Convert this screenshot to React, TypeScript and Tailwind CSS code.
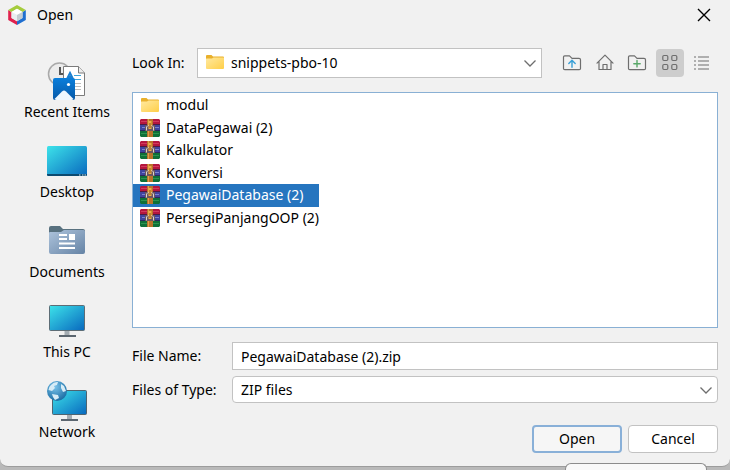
import type { ReactNode } from 'react';
import { useState } from 'react';

function NetBeansLogo() {
  return (
    <svg width="20" height="22" viewBox="0 0 20 22" aria-hidden="true">
      <path d="M1.2 6v10L10 21v-3.8l-5.500-3.100V7.900z" fill="#e0224e" />
      <path d="M18.800 6v10L10 21v-3.800l5.500-3.100V7.900z" fill="#1f6fd0" />
      <path d="M10 1 1.200 6l3.300 1.900L10 4.800l5.500 3.100L18.800 6z" fill="#a5cc3c" />
      <path d="m10 4.800 5.500 3.100L10 11 4.500 7.900z" fill="#fff" />
      <path d="M4.500 7.900 10 11v6.200l-5.500-3.100z" fill="#e9eef0" />
      <path d="M15.500 7.900 10 11v6.200l5.500-3.100z" fill="#c3ccd0" />
    </svg>
  );
}

function Gradients() {
  return (
    <svg width="0" height="0" className="absolute" aria-hidden="true">
      <defs>
        <linearGradient id="screen" x1="0" y1="0" x2="1" y2="1">
          <stop offset="0" stopColor="#3de3ea" />
          <stop offset="1" stopColor="#0868be" />
        </linearGradient>
        <linearGradient id="photo" x1="0" y1="0" x2="0" y2="1">
          <stop offset="0" stopColor="#0a7edb" />
          <stop offset="1" stopColor="#0759a8" />
        </linearGradient>
        <linearGradient id="docs" x1="0" y1="0" x2="1" y2="1">
          <stop offset="0" stopColor="#aec4dc" />
          <stop offset="1" stopColor="#6583a5" />
        </linearGradient>
        <linearGradient id="folder" x1="0" y1="0" x2="1" y2="1">
          <stop offset="0" stopColor="#ffe9a0" />
          <stop offset="1" stopColor="#ffcf48" />
        </linearGradient>
        <radialGradient id="globe" cx="0.4" cy="0.3" r="0.7">
          <stop offset="0" stopColor="#79c3ea" />
          <stop offset="1" stopColor="#1d6ea5" />
        </radialGradient>
      </defs>
    </svg>
  );
}

function RecentIcon() {
  return (
    <svg width="40" height="40" viewBox="0 0 40 40" aria-hidden="true">
      <circle cx="12.500" cy="13" r="11" fill="#ececec" stroke="#a9a9a9" strokeWidth="1.500" />
      <path d="M13 6v7h5" fill="none" stroke="#555" strokeWidth="2" />
      <path d="M16.500 5.500h15l6 6.500v22.500h-21z" fill="#fff" stroke="#7b7b7b" />
      <path d="M31.500 5.500V12h6" fill="#ececec" stroke="#7b7b7b" />
      <path d="m20 18 3-6 3 6m-5-2h4" fill="none" stroke="#1a7fd0" strokeWidth="2" />
      <path d="M27 14.500h7M20 18.500h14" stroke="#3da4dc" />
      <path d="M24 22.500h10M24 25.500h10M24 28.500h10" stroke="#bdbdbd" />
      <rect x="6" y="17" width="22" height="22" rx="2" fill="url(#photo)" />
      <path d="M7.500 38 15 30.500q2-2 4 0l7.500 7.500q-1 1-2 1h-15q-1 0-2-1z" fill="#eef7ff" />
      <circle cx="21.500" cy="23.500" r="1.600" fill="#fff" />
    </svg>
  );
}

function DesktopIcon() {
  return (
    <svg width="40" height="40" viewBox="0 0 40 40" aria-hidden="true">
      <rect y="5" width="40" height="30" rx="1.500" fill="url(#screen)" />
      <path d="M0 33h40v.500q0 1.500-1.500 1.500h-37Q0 35 0 33.500z" fill="#0c4a70" />
      <path d="M32 34h1.500m1.500 0h1.500m1 0H39" stroke="#d5e9f5" />
    </svg>
  );
}

function DocumentsIcon() {
  return (
    <svg width="40" height="40" viewBox="0 0 40 40" aria-hidden="true">
      <path d="M2 7q0-2 2-2h9l3 3h20q2 0 2 2v5H2z" fill="#58717f" />
      <path d="M2 12q0-1 1-1h11l3-2h19.500Q38 9 38 10.500V31q0 2-2 2H4q-2 0-2-2z" fill="url(#docs)" />
      <path d="M12 14h8M12 18h8M12 22.500h16M12 27h16" stroke="#fff" strokeWidth="2" />
      <rect x="22" y="13" width="6" height="6" fill="#fff" />
    </svg>
  );
}

function ComputerIcon() {
  return (
    <svg width="40" height="40" viewBox="0 0 40 40" aria-hidden="true">
      <rect x="2.500" y="4.500" width="35" height="25" rx="1" fill="url(#screen)" stroke="#5d6d76" />
      <path d="M17.500 30h5v4h-5z" fill="#a5adb3" />
      <path d="M12 34h17v2H12z" fill="#5b6670" />
    </svg>
  );
}

function NetworkIcon() {
  return (
    <svg width="40" height="42" viewBox="0 0 40 42" aria-hidden="true">
      <rect x="5.500" y="10.500" width="34" height="24" rx="1" fill="url(#screen)" stroke="#4f6470" />
      <path d="M20 35h5v4h-5z" fill="#a5adb3" />
      <path d="M14 39h17v2H14z" fill="#5b6670" />
      <circle cx="10" cy="11" r="10" fill="url(#globe)" />
      <path d="M4 5q3-3.500 7-3l-1 3-3 1 1 2-3 3-3.500-1Q1.500 7 4 5zM14 4l3 2 2 5-3 1-2-4zM5 14l6 1 1 3-4 2-2-3z" fill="#d7ecf6" />
    </svg>
  );
}

function FolderIcon() {
  return (
    <svg width="20" height="18" viewBox="0 0 20 18" className="shrink-0" aria-hidden="true">
      <path d="M1 3q0-1 1-1h4.500L8 3.500h10q1 0 1 1V8H1z" fill="#e9b02b" />
      <path d="M1 6q0-.500.500-.500H7L8.500 4.500h10q.500 0 .500.500v10q0 1-1 1H2q-1 0-1-1z" fill="url(#folder)" />
    </svg>
  );
}

function ArchiveIcon() {
  return (
    <svg width="20" height="18" viewBox="0 0 20 18" className="shrink-0" aria-hidden="true">
      <path d="M1 0h18l1 1v5H0V1z" fill="#b5173f" />
      <path d="M1 2.500h18" stroke="#d23a5e" />
      <path d="M0 6h20v6H0z" fill="#40459f" />
      <path d="M2 8.500h17" stroke="#7b83cf" />
      <path d="M0 12h20v5l-1 1H1l-1-1z" fill="#0f7038" />
      <path d="M1 14.500h18" stroke="#2c9450" />
      <path d="M0 5.500h20M0 11.500h20" stroke="#231d45" strokeOpacity="0.700" />
      <path d="M7 0h6v18H7z" fill="#b9722a" />
      <path d="M8.500 0v18" stroke="#dfa04a" />
      <path d="M5 6h10v6H5z" fill="#6b5560" />
      <path d="M6.500 11.500V8L8 6.500h4L13.500 8v3.500" fill="none" stroke="#d9d4cc" />
      <path d="M8.500 2h3v8h-3z" fill="#f0ae45" />
      <path d="M10 4v5" stroke="#8c5520" />
    </svg>
  );
}

function Chevron() {
  return (
    <svg width="12" height="8" viewBox="0 0 12 8" className="pointer-events-none absolute top-1/2 right-[6px] -translate-y-1/2" aria-hidden="true">
      <path d="m.500 1.500 5.500 5.500 5.500-5.500" fill="none" stroke="#6e6e6e" strokeWidth="1.300" />
    </svg>
  );
}

function ToolIcon({ children }: { children: ReactNode }) {
  return (
    <svg width="20" height="20" viewBox="0 0 20 20" fill="none" stroke="#6e6e6e" strokeWidth="1.200" strokeLinejoin="round" strokeLinecap="round" aria-hidden="true">
      {children}
    </svg>
  );
}

const folderOutline = 'M1.500 15.500V4q0-1.200 1.200-1.200h4.800l2.500 2.500h7q1.500 0 1.500 1.500v8.700q0 1.200-1.200 1.200H2.700q-1.200 0-1.200-1.200z';

const tools: { name: string; icon: ReactNode }[] = [
  {
    name: 'Up One Level',
    icon: (
      <>
        <path d={folderOutline} />
        <path d="M10 14.300V7.500M6.800 10.500 10 7.300l3.200 3.200" stroke="#389fd6" strokeWidth="1.400" />
      </>
    ),
  },
  {
    name: 'Home',
    icon: (
      <>
        <path d="M2 10.200 10 2.200l8 8M4 8.500v8h12v-8" />
        <path d="M8 16.500v-5h4v5" />
      </>
    ),
  },
  {
    name: 'Create New Folder',
    icon: (
      <>
        <path d={folderOutline} />
        <path d="M10 7.500v6.400M6.800 10.700h6.400" stroke="#59a869" strokeWidth="1.400" />
      </>
    ),
  },
  {
    name: 'List',
    icon: (
      <>
        <rect x="2.800" y="2.500" width="5" height="5" rx="1.200" />
        <rect x="11.800" y="2.500" width="5" height="5" rx="1.200" />
        <rect x="2.800" y="11.500" width="5" height="5" rx="1.200" />
        <rect x="11.800" y="11.500" width="5" height="5" rx="1.200" />
      </>
    ),
  },
  {
    name: 'Details',
    icon: <path strokeLinecap="butt" d="M2 4h2m2 0h11M2 8h2m2 0h11M2 12h2m2 0h11M2 16h2m2 0h11" />,
  },
];

const places = [
  { name: 'Recent Items', icon: <RecentIcon /> },
  { name: 'Desktop', icon: <DesktopIcon /> },
  { name: 'Documents', icon: <DocumentsIcon /> },
  { name: 'This PC', icon: <ComputerIcon /> },
  { name: 'Network', icon: <NetworkIcon /> },
];

const files = ['modul', 'DataPegawai (2)', 'Kalkulator', 'Konversi', 'PegawaiDatabase (2)', 'PersegiPanjangOOP (2)'];

export default function App() {
  const [selected, setSelected] = useState('PegawaiDatabase (2)');
  const [fileName, setFileName] = useState('PegawaiDatabase (2).zip');
  const [view, setView] = useState('List');

  const choose = (file: string) => {
    setSelected(file);
    if (file !== 'modul') setFileName(`${file}.zip`);
  };

  return (
    <div className="relative flex h-screen flex-col overflow-hidden bg-[#b9b9b9] pb-[3px] font-['Noto_Sans','Open_Sans',sans-serif] text-sm text-black">
      <Gradients />
      <div role="dialog" aria-label="Open" className="flex flex-1 flex-col rounded-b-lg border-b border-[#9c9c9c] bg-[#f1f1f1]">
        <header className="flex h-[30px] items-center pr-[19px] pl-[7px]">
          <NetBeansLogo />
          <h1 className="ml-[10px] flex-1">Open</h1>
          <button type="button" aria-label="Close">
            <svg width="14" height="14" viewBox="0 0 14 14" aria-hidden="true">
              <path d="m1 1 12 12M13 1 1 13" stroke="#000" strokeWidth="1.400" />
            </svg>
          </button>
        </header>

        <div className="flex flex-1 pr-3">
          <nav aria-label="Places" className="flex w-[132px] shrink-0 flex-col items-center gap-[19px] pt-[31px] pl-[2px]">
            {places.map((place) => (
              <button key={place.name} type="button" className="flex h-[61px] flex-col items-center gap-px">
                <span className="flex h-10 items-center">{place.icon}</span>
                <span className="leading-5">{place.name}</span>
              </button>
            ))}
          </nav>

          <main className="flex min-w-0 flex-1 flex-col pt-[18px]">
            <div className="flex items-center">
              <label htmlFor="look-in" className="w-[65px] shrink-0">Look In:</label>
              <div className="relative min-w-0 flex-1">
                <select id="look-in" className="block h-[30px] w-full appearance-none border border-[#c2c2c2] bg-white pl-[33px]">
                  <option>snippets-pbo-10</option>
                </select>
                <span className="pointer-events-none absolute top-[5px] left-2">
                  <FolderIcon />
                </span>
                <Chevron />
              </div>
              <div className="mr-[2px] ml-4 flex w-[158px] justify-between">
                {tools.map((tool) => (
                  <button
                    key={tool.name}
                    type="button"
                    aria-label={tool.name}
                    onClick={() => setView(tool.name)}
                    className={`flex h-7 w-7 items-center justify-center rounded ${view === tool.name ? 'bg-[#cdcdcd]' : ''}`}
                  >
                    <ToolIcon>{tool.icon}</ToolIcon>
                  </button>
                ))}
              </div>
            </div>

            <div className="mt-[14px] h-[236px] border border-[#89b0d4] bg-white pt-px">
              <ul role="listbox" aria-label="Files" className="flex h-[135px] w-max flex-col">
                {files.map((file) => (
                  <li
                    key={file}
                    role="option"
                    aria-selected={selected === file}
                    onClick={() => choose(file)}
                    className={`flex flex-1 items-center gap-[6px] pl-[7px] ${selected === file ? 'bg-[#2675bf] text-white' : ''}`}
                  >
                    {file === 'modul' ? <FolderIcon /> : <ArchiveIcon />}
                    <span className="leading-5">{file}</span>
                  </li>
                ))}
              </ul>
            </div>

            <div className="mt-[14px] flex items-center">
              <label htmlFor="file-name" className="w-[100px] shrink-0">File Name:</label>
              <input
                id="file-name"
                type="text"
                value={fileName}
                onChange={(event) => setFileName(event.target.value)}
                className="h-7 min-w-0 flex-1 border border-[#c2c2c2] bg-white px-2 outline-none"
              />
            </div>
            <div className="mt-[6px] flex items-center">
              <label htmlFor="file-type" className="w-[100px] shrink-0">Files of Type:</label>
              <div className="relative min-w-0 flex-1">
                <select id="file-type" className="block h-[27px] w-full appearance-none rounded border border-[#c2c2c2] bg-white px-2">
                  <option>ZIP files</option>
                </select>
                <Chevron />
              </div>
            </div>

            <div className="mt-[22px] flex justify-end gap-[6px]">
              <button type="button" className="h-7 w-[90px] rounded border-2 border-[#89b0d8] bg-[#f6f6f6]">Open</button>
              <button type="button" className="h-7 w-[90px] rounded border border-[#c2c2c2] bg-white">Cancel</button>
            </div>
          </main>
        </div>
      </div>
      <div className="absolute right-[23px] bottom-0 h-[7px] w-[142px] rounded-t-md border border-b-0 border-[#8c8c8c] bg-[#f9f9f9]" />
    </div>
  );
}
